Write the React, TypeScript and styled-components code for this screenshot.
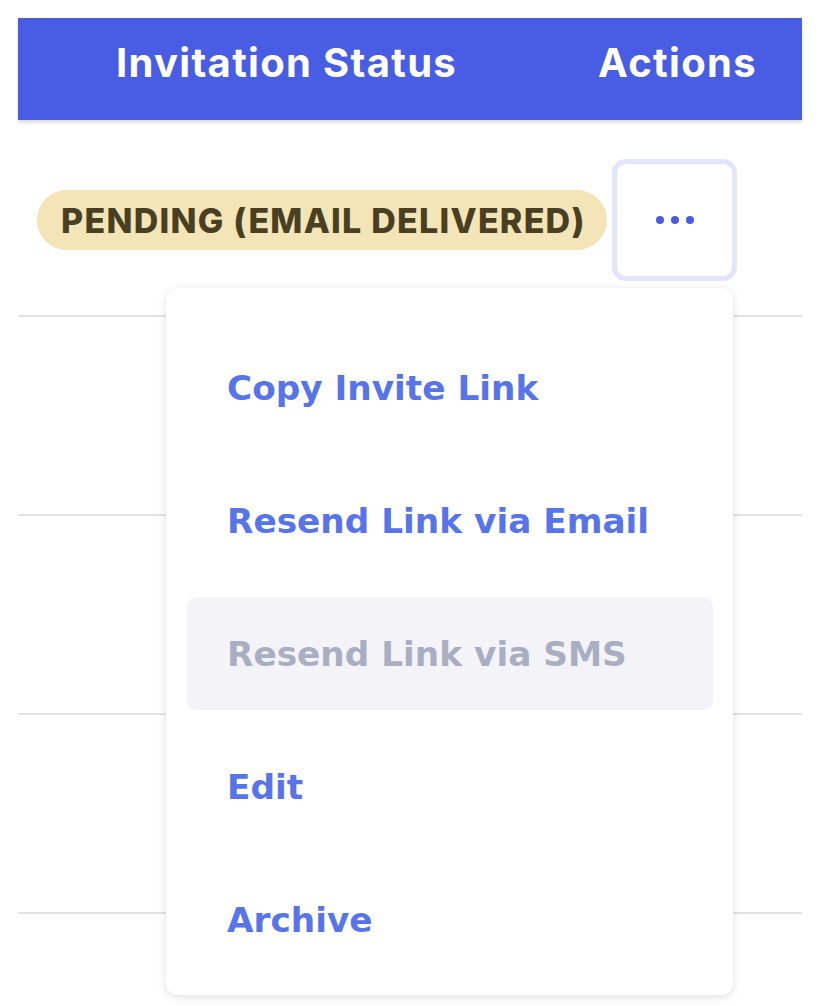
import React from 'react'
import styled, { createGlobalStyle } from 'styled-components';

const GlobalStyle = createGlobalStyle`
  html, body {
    margin: 0;
    padding: 0;
    background: #fff;
  }
  body {
    font-family: Roboto, "Liberation Sans", sans-serif;
  }
`;

interface menuItem {
  label: string;
  disabled?: boolean;
}

const menuItems: menuItem[] = [
  { label: "Copy Invite Link" },
  { label: "Resend Link via Email" },
  { label: "Resend Link via SMS", disabled: true },
  { label: "Edit" },
  { label: "Archive" },
];

function App() {
  return (
    <Page>
      <GlobalStyle />
      <Table>
        <HeaderRow>
          <HeadCell>Invitation Status</HeadCell>
          <HeadCell>Actions</HeadCell>
        </HeaderRow>
        <Row>
          <StatusCell>
            <Badge>PENDING (EMAIL DELIVERED)</Badge>
          </StatusCell>
          <ActionCell>
            <ActionWrap>
              <DotsBtn aria-label="More actions">
                <Dot />
                <Dot />
                <Dot />
              </DotsBtn>
              <Menu>
                {menuItems.map((item) => (
                  <MenuItem key={item.label} disabled={item.disabled}>
                    {item.label}
                  </MenuItem>
                ))}
              </Menu>
            </ActionWrap>
          </ActionCell>
        </Row>
        <Row tall />
        <Row tall />
        <Row tall />
      </Table>
    </Page>
  )
}

export default App

const Page = styled.div`
  padding: 18px 16px 0 18px;
  min-height: 1006px;
  box-sizing: border-box;
  overflow: hidden;
`;

const Table = styled.div`
  display: flex;
  flex-direction: column;
  width: 784px;
`;

const HeaderRow = styled.div`
  display: grid;
  grid-template-columns: 580px 1fr;
  align-items: center;
  height: 102px;
  padding-bottom: 14px;
  box-sizing: border-box;
  background-color: #485de3;
  box-shadow: 0 3px 3px rgba(0, 0, 0, 0.13);
  position: relative;
  z-index: 1;
`;

const HeadCell = styled.div`
  color: #fff;
  font-family: Inter, Roboto, sans-serif;
  font-weight: 700;
  font-size: 40px;
  letter-spacing: 1.3px;
  &:first-child {
    padding-left: 98px;
  }
`;

const Row = styled.div<{ tall?: boolean }>`
  display: grid;
  grid-template-columns: 580px 1fr;
  align-items: center;
  height: ${props => props.tall ? "199px" : "192px"};
  border-bottom: 2px solid #e3e3e3;
  box-sizing: border-box;
  margin-top: ${props => props.tall ? "0" : "5px"};
`;

const StatusCell = styled.div`
  padding-left: 19px;
  display: flex;
  align-items: center;
`;

const Badge = styled.span`
  display: inline-flex;
  align-items: center;
  height: 60px;
  padding: 0 21px 0 24px;
  border-radius: 30px;
  background-color: #f3e5b8;
  color: #4a3f21;
  font-family: Inter, Roboto, sans-serif;
  font-weight: 800;
  font-size: 34px;
  letter-spacing: 1.25px;
  white-space: nowrap;
`;

const ActionCell = styled.div`
  display: flex;
  align-items: center;
  padding-left: 14px;
`;

const ActionWrap = styled.div`
  position: relative;
`;

const DotsBtn = styled.button`
  display: flex;
  justify-content: center;
  align-items: center;
  gap: 7px;
  width: 125px;
  height: 122px;
  border: 5px solid #e2e6fc;
  border-radius: 14px;
  background: #fff;
  box-sizing: border-box;
  cursor: pointer;
`;

const Dot = styled.span`
  width: 8px;
  height: 8px;
  border-radius: 50%;
  background-color: #4a5ce2;
`;

const Menu = styled.div`
  position: absolute;
  top: calc(100% + 7px);
  right: 4px;
  z-index: 5;
  width: 567px;
  padding: 43px 20px 19px 21px;
  box-sizing: border-box;
  display: flex;
  flex-direction: column;
  gap: 20px;
  background: #fff;
  border-radius: 12px;
  box-shadow: 0 2px 10px rgba(0, 0, 0, 0.12);
`;

const MenuItem = styled.div<{ disabled?: boolean }>`
  display: flex;
  align-items: center;
  height: 113px;
  padding-left: 40px;
  border-radius: 10px;
  font-family: "DejaVu Sans", Inter, sans-serif;
  font-weight: 700;
  font-size: 34.3px;
  color: ${props => props.disabled ? "#a9aec2" : "#5874ea"};
  background-color: ${props => props.disabled ? "#f4f4f8" : "transparent"};
  cursor: ${props => props.disabled ? "default" : "pointer"};
`;
